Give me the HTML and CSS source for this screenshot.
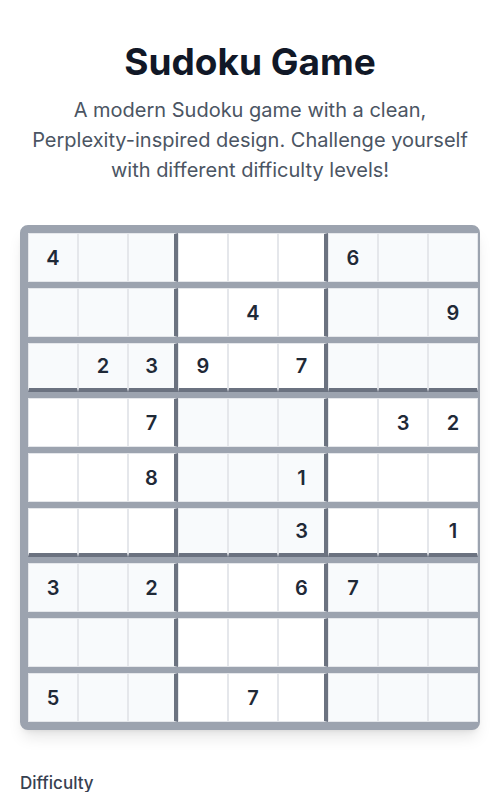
FILE: index.html
```html
<!DOCTYPE html>
<html lang="en">
<head>
<meta charset="utf-8">
<title>Sudoku Game</title>
<link rel="stylesheet" href="styles.css">
</head>
<body>
<main class="page">
  <h1 class="title">Sudoku Game</h1>
  <p class="subtitle">A modern Sudoku game with a clean, Perplexity-inspired design. Challenge yourself with different difficulty levels!</p>

  <div class="board">
    <div class="row">
      <div class="cell shade">4</div><div class="cell shade"></div><div class="cell shade br"></div>
      <div class="cell"></div><div class="cell"></div><div class="cell br"></div>
      <div class="cell shade">6</div><div class="cell shade"></div><div class="cell shade"></div>
    </div>
    <div class="row">
      <div class="cell shade"></div><div class="cell shade"></div><div class="cell shade br"></div>
      <div class="cell"></div><div class="cell">4</div><div class="cell br"></div>
      <div class="cell shade"></div><div class="cell shade"></div><div class="cell shade">9</div>
    </div>
    <div class="row bb">
      <div class="cell shade"></div><div class="cell shade">2</div><div class="cell shade br">3</div>
      <div class="cell">9</div><div class="cell"></div><div class="cell br">7</div>
      <div class="cell shade"></div><div class="cell shade"></div><div class="cell shade"></div>
    </div>
    <div class="row">
      <div class="cell"></div><div class="cell"></div><div class="cell br">7</div>
      <div class="cell shade"></div><div class="cell shade"></div><div class="cell shade br"></div>
      <div class="cell"></div><div class="cell">3</div><div class="cell">2</div>
    </div>
    <div class="row">
      <div class="cell"></div><div class="cell"></div><div class="cell br">8</div>
      <div class="cell shade"></div><div class="cell shade"></div><div class="cell shade br">1</div>
      <div class="cell"></div><div class="cell"></div><div class="cell"></div>
    </div>
    <div class="row bb">
      <div class="cell"></div><div class="cell"></div><div class="cell br"></div>
      <div class="cell shade"></div><div class="cell shade"></div><div class="cell shade br">3</div>
      <div class="cell"></div><div class="cell"></div><div class="cell">1</div>
    </div>
    <div class="row">
      <div class="cell shade">3</div><div class="cell shade"></div><div class="cell shade br">2</div>
      <div class="cell"></div><div class="cell"></div><div class="cell br">6</div>
      <div class="cell shade">7</div><div class="cell shade"></div><div class="cell shade"></div>
    </div>
    <div class="row">
      <div class="cell shade"></div><div class="cell shade"></div><div class="cell shade br"></div>
      <div class="cell"></div><div class="cell"></div><div class="cell br"></div>
      <div class="cell shade"></div><div class="cell shade"></div><div class="cell shade"></div>
    </div>
    <div class="row">
      <div class="cell shade">5</div><div class="cell shade"></div><div class="cell shade br"></div>
      <div class="cell"></div><div class="cell">7</div><div class="cell br"></div>
      <div class="cell shade"></div><div class="cell shade"></div><div class="cell shade"></div>
    </div>
  </div>

  <section class="controls">
    <label class="label">Difficulty</label>
  </section>
</main>
</body>
</html>
```

FILE: styles.css
```css
* { box-sizing: border-box; }

html, body {
  margin: 0;
  padding: 0;
  background: #ffffff;
}

body {
  font-family: Inter, "Noto Sans", "Liberation Sans", sans-serif;
  color: #111827;
}

.page {
  width: 460px;
  margin: 0 auto;
  padding-top: 42px;
}

.title {
  margin: 0;
  font-size: 37px;
  line-height: 40px;
  font-weight: 700;
  text-align: center;
  color: #111827;
}

.subtitle {
  max-width: 440px;
  margin: 13px auto 0;
  font-size: 20px;
  line-height: 30px;
  text-align: center;
  color: #4b5563;
}

.board {
  margin-top: 40px;
  display: flex;
  flex-direction: column;
  gap: 6px;
  padding: 6px 0 6px 6px;
  background: #9ca3af;
  border: 2px solid #9ca3af;
  border-radius: 8px;
  box-shadow: 0 10px 15px -3px rgba(0, 0, 0, 0.1), 0 4px 6px -4px rgba(0, 0, 0, 0.1);
}

.row {
  display: flex;
}

.cell {
  flex: 0 0 50px;
  width: 50px;
  height: 49px;
  display: flex;
  align-items: center;
  justify-content: center;
  background: #ffffff;
  border: 1px solid #e5e7eb;
  font-size: 20px;
  font-weight: 600;
  color: #1f2937;
}

.cell.shade {
  background: #f8fafc;
}

.cell.br {
  border-right: 4px solid #6b7280;
}

.row.bb .cell {
  border-bottom: 4px solid #6b7280;
}

.controls {
  margin-top: 41px;
}

.label {
  display: block;
  font-size: 17px;
  line-height: 24px;
  font-weight: 500;
  color: #374151;
}
```
